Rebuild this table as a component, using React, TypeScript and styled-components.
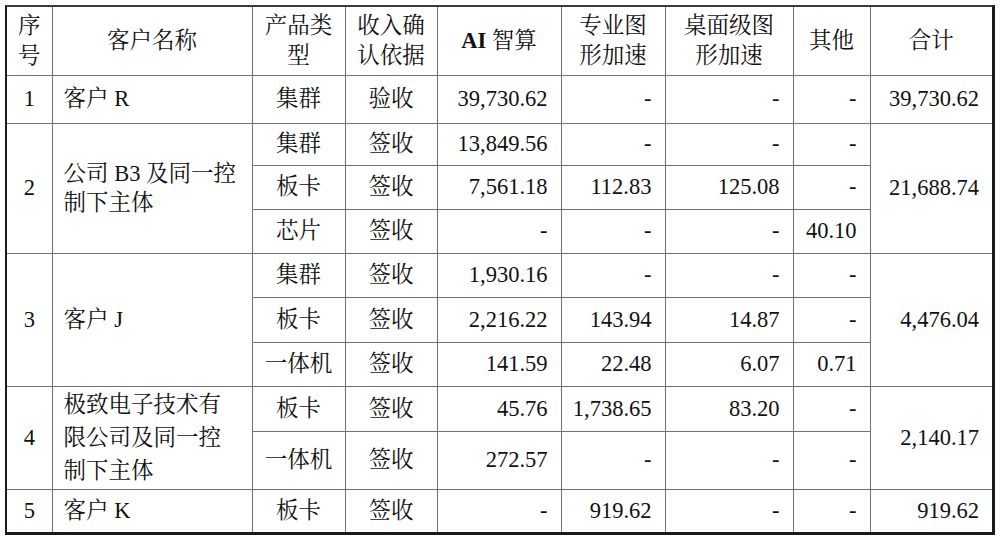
import React from "react";
import styled, { createGlobalStyle } from "styled-components";

const GlobalStyle = createGlobalStyle`
  html, body { margin: 0; padding: 0; background: #fff; }
  body { width: 1000px; height: 541px; overflow: hidden; }
`;

const Page = styled.div`
  padding: 5px;
  font-family: "Liberation Serif", "Noto Serif CJK SC", "Noto Sans CJK SC", serif;
  color: #111;
`;

const Frame = styled.div`
  width: 990px;
  box-sizing: border-box;
  border: 2px solid #1a1a1a;
  border-top-color: #3a3a3a;
  border-right-width: 3px;
  border-bottom-width: 3px;
`;

const Table = styled.table`
  width: 985px;
  table-layout: fixed;
  border-collapse: collapse;
  border-style: hidden;
  font-size: 22.5px;
`;

const Row = styled.tr<{ $h: number }>`
  height: ${(p) => p.$h}px;
`;

type Align = "left" | "center" | "right";

const Cell = styled.td<{ $align?: Align; $lh?: number; $pr?: number }>`
  border: 1px solid #727272;
  padding: 0;
  padding-left: ${(p) => (p.$align === "left" ? 11 : 0)}px;
  padding-right: ${(p) => (p.$align === "right" ? p.$pr ?? 13 : 0)}px;
  text-align: ${(p) => p.$align ?? "center"};
  vertical-align: middle;
  line-height: ${(p) => p.$lh ?? 28}px;
  white-space: nowrap;
  font-weight: 400;
`;

const Head = styled(Cell).attrs({ as: "th" })``;

const Bold = styled.b`
  font-weight: 700;
`;

const widths = [45, 200, 93, 92, 124, 104, 128, 77, 122];

type Spec = {
  t: React.ReactNode;
  a?: Align;
  rs?: number;
  lh?: number;
  pr?: number;
};

const L = (t: React.ReactNode, rs?: number, lh?: number): Spec => ({ t, a: "left", rs, lh });
const C = (t: React.ReactNode, rs?: number): Spec => ({ t, a: "center", rs });
const R = (t: React.ReactNode): Spec => ({ t, a: "right" });
const T = (t: React.ReactNode, rs?: number): Spec => ({ t, a: "right", rs, pr: 13 });

const rows: { h: number; cells: Spec[] }[] = [
  {
    h: 48,
    cells: [C("1"), L("客户 R"), C("集群"), C("验收"), R("39,730.62"), R("-"), R("-"), R("-"), T("39,730.62")],
  },
  {
    h: 42,
    cells: [
      C("2", 3),
      L(<>公司 B3 及同一控<br />制下主体</>, 3, 29),
      C("集群"),
      C("签收"),
      R("13,849.56"),
      R("-"),
      R("-"),
      R("-"),
      T("21,688.74", 3),
    ],
  },
  { h: 44, cells: [C("板卡"), C("签收"), R("7,561.18"), R("112.83"), R("125.08"), R("-")] },
  { h: 44, cells: [C("芯片"), C("签收"), R("-"), R("-"), R("-"), R("40.10")] },
  {
    h: 44,
    cells: [C("3", 3), L("客户 J", 3), C("集群"), C("签收"), R("1,930.16"), R("-"), R("-"), R("-"), T("4,476.04", 3)],
  },
  { h: 45, cells: [C("板卡"), C("签收"), R("2,216.22"), R("143.94"), R("14.87"), R("-")] },
  { h: 44, cells: [C("一体机"), C("签收"), R("141.59"), R("22.48"), R("6.07"), R("0.71")] },
  {
    h: 45,
    cells: [
      C("4", 2),
      L(<>极致电子技术有<br />限公司及同一控<br />制下主体</>, 2, 33),
      C("板卡"),
      C("签收"),
      R("45.76"),
      R("1,738.65"),
      R("83.20"),
      R("-"),
      T("2,140.17", 2),
    ],
  },
  { h: 58, cells: [C("一体机"), C("签收"), R("272.57"), R("-"), R("-"), R("-")] },
  {
    h: 43,
    cells: [C("5"), L("客户 K"), C("板卡"), C("签收"), R("-"), R("919.62"), R("-"), R("-"), T("919.62")],
  },
];

const headers: React.ReactNode[] = [
  <>序<br />号</>,
  "客户名称",
  <>产品类<br />型</>,
  <>收入确<br />认依据</>,
  <><Bold>AI</Bold> 智算</>,
  <>专业图<br />形加速</>,
  <>桌面级图<br />形加速</>,
  "其他",
  "合计",
];

export default function App() {
  return (
    <>
      <GlobalStyle />
      <Page>
        <Frame>
          <Table>
            <colgroup>
              {widths.map((w, i) => (
                <col key={i} style={{ width: w }} />
              ))}
            </colgroup>
            <thead>
              <Row $h={68}>
                {headers.map((h, i) => (
                  <Head key={i} $align="center" $lh={30}>
                    {h}
                  </Head>
                ))}
              </Row>
            </thead>
            <tbody>
              {rows.map((r, ri) => (
                <Row key={ri} $h={r.h}>
                  {r.cells.map((c, ci) => (
                    <Cell key={ci} $align={c.a} $lh={c.lh} $pr={c.pr} rowSpan={c.rs}>
                      {c.t}
                    </Cell>
                  ))}
                </Row>
              ))}
            </tbody>
          </Table>
        </Frame>
      </Page>
    </>
  );
}
